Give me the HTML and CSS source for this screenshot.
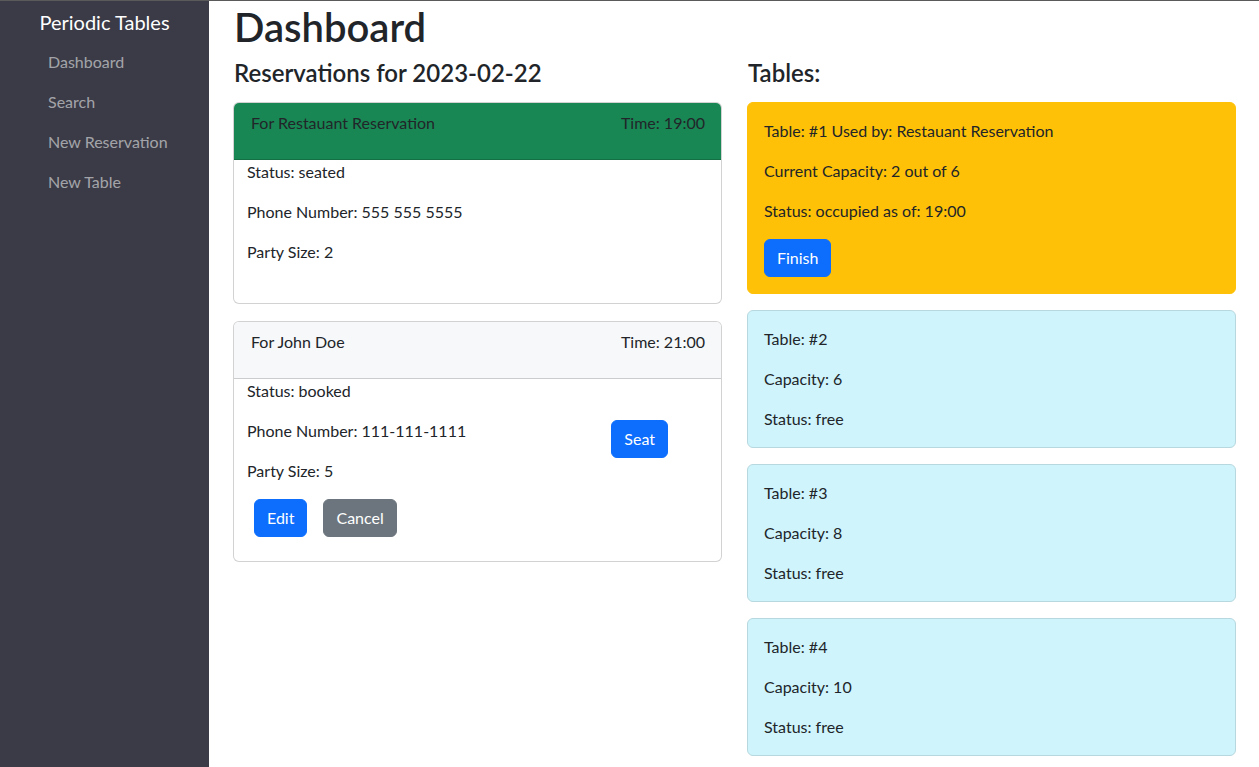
FILE: index.html
```html
<!DOCTYPE html>
<html lang="en">
<head>
<meta charset="utf-8">
<title>Periodic Tables</title>
<link rel="stylesheet" href="styles.css">
</head>
<body>
<div class="app">
  <nav class="sidebar">
    <div class="brand">Periodic Tables</div>
    <ul class="nav">
      <li><a href="#">Dashboard</a></li>
      <li><a href="#">Search</a></li>
      <li><a href="#">New Reservation</a></li>
      <li><a href="#">New Table</a></li>
    </ul>
  </nav>
  <main class="main">
    <h1 class="title">Dashboard</h1>
    <div class="columns">
      <section class="col">
        <h4 class="subtitle">Reservations for 2023-02-22</h4>
        <div class="card res-card">
          <div class="card-header header-seated">
            <p>For Restauant Reservation</p>
            <p>Time: 19:00</p>
          </div>
          <div class="res-body">
            <div class="info">
              <p>Status: seated</p>
              <p>Phone Number: 555 555 5555</p>
              <p>Party Size: 2</p>
            </div>
          </div>
          <div class="res-footer-space"></div>
        </div>
        <div class="card res-card">
          <div class="card-header header-booked">
            <p>For John Doe</p>
            <p>Time: 21:00</p>
          </div>
          <div class="res-body">
            <div class="info">
              <p>Status: booked</p>
              <p>Phone Number: 111-111-1111</p>
              <p>Party Size: 5</p>
            </div>
            <div class="seat-wrap">
              <button class="btn btn-primary">Seat</button>
            </div>
          </div>
          <div class="actions">
            <button class="btn btn-primary">Edit</button>
            <button class="btn btn-secondary">Cancel</button>
          </div>
        </div>
      </section>
      <section class="col">
        <h4 class="subtitle">Tables:</h4>
        <div class="card table-card occupied">
          <p>Table: #1 Used by: Restauant Reservation</p>
          <p>Current Capacity: 2 out of 6</p>
          <p>Status: occupied as of: 19:00</p>
          <button class="btn btn-primary">Finish</button>
        </div>
        <div class="card table-card free">
          <p>Table: #2</p>
          <p>Capacity: 6</p>
          <p>Status: free</p>
        </div>
        <div class="card table-card free">
          <p>Table: #3</p>
          <p>Capacity: 8</p>
          <p>Status: free</p>
        </div>
        <div class="card table-card free">
          <p>Table: #4</p>
          <p>Capacity: 10</p>
          <p>Status: free</p>
        </div>
      </section>
    </div>
  </main>
</div>
</body>
</html>
```

FILE: styles.css
```css
* { box-sizing: border-box; }

html, body {
  margin: 0;
  padding: 0;
  height: 100%;
}

body {
  font-family: "Lato", "Open Sans", "Liberation Sans", sans-serif;
  font-size: 16px;
  line-height: 24px;
  color: #212529;
  background: #fff;
  border-top: 1px solid #5a5a5a;
}

p { margin: 0; }

.app {
  display: flex;
  min-height: 766px;
}

.sidebar {
  width: 209px;
  flex: 0 0 209px;
  background: #3a3b46;
}

.brand {
  text-align: center;
  color: #fff;
  font-size: 20px;
  line-height: 30px;
  padding: 6px 0 0 0;
}

.nav {
  list-style: none;
  margin: 0;
  padding: 5px 0 0 48px;
}

.nav li a {
  display: block;
  color: rgba(255, 255, 255, 0.55);
  text-decoration: none;
  padding: 8px 0;
  line-height: 24px;
}

.main {
  flex: 1;
  padding: 0 23px 0 24px;
}

.title {
  margin: 2px 0 0 1px;
  font-size: 40px;
  line-height: 48px;
  font-weight: 600;
}

.columns {
  display: flex;
  gap: 25px;
  margin-top: 7px;
}

.col {
  flex: 1;
  min-width: 0;
}

.subtitle {
  margin: 0 0 15px 1px;
  font-size: 24px;
  line-height: 29px;
  font-weight: 600;
}

.card {
  border: 1px solid rgba(0, 0, 0, 0.175);
  border-radius: 6px;
  background: #fff;
}

.res-card {
  margin-bottom: 17px;
  overflow: hidden;
}

.card-header {
  display: flex;
  justify-content: space-between;
  padding: 8px 16px 24px 17px;
  border-bottom: 1px solid rgba(0, 0, 0, 0.175);
}

.header-seated { background: #198754; }
.header-booked { background: #f7f8f9; }

.res-body {
  display: flex;
  align-items: center;
  padding: 0 13px;
}

.info { flex: 1; }

.info p { margin-bottom: 16px; }

.seat-wrap {
  padding-right: 40px;
}

.res-footer-space { height: 23px; }

.actions {
  display: flex;
  gap: 16px;
  padding: 0 0 24px 20px;
}

.btn {
  font-family: inherit;
  font-size: 16px;
  line-height: 24px;
  padding: 6px 12px;
  border: 1px solid transparent;
  border-radius: 6px;
  color: #fff;
  cursor: pointer;
}

.btn-primary { background: #0d6efd; border-color: #0d6efd; }
.btn-secondary { background: #6c757d; border-color: #6c757d; }

.table-card {
  padding: 16px;
  margin-bottom: 16px;
}

.table-card p { margin-bottom: 16px; }
.table-card p:last-of-type { margin-bottom: 0; }
.table-card.occupied p:last-of-type { margin-bottom: 16px; }

.occupied {
  background: #ffc107;
  border-color: #ffc107;
}

.free {
  background: #cff4fc;
  border-color: #b8d8df;
}
```
